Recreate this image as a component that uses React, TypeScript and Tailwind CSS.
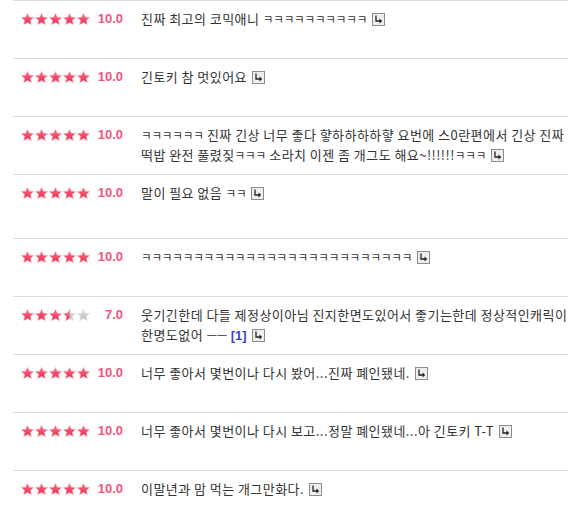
import React from "react";

type Review = { score: string; stars: number; text: React.ReactNode; h: string };

function Star({ fill }: { fill: "full" | "half" | "empty" }) {
  const d =
    "M6.5 0.4 L8.3 4.2 L12.6 4.6 L9.3 7.4 L10.3 11.6 L6.5 9.4 L2.7 11.6 L3.7 7.4 L0.4 4.6 L4.7 4.2 Z";
  const id = React.useId();
  return (
    <svg width="13" height="12" viewBox="0 0 13 12" className="shrink-0">
      <defs>
        <linearGradient id={id + "g"} x1="0" y1="0" x2="0" y2="1">
          <stop offset="0" stopColor="#ff6f8a" />
          <stop offset="1" stopColor="#ea2a4c" />
        </linearGradient>
        <linearGradient id={id + "e"} x1="0" y1="0" x2="0" y2="1">
          <stop offset="0" stopColor="#e0e0e0" />
          <stop offset="1" stopColor="#bdbdbd" />
        </linearGradient>
        <clipPath id={id + "c"}>
          <rect x="0" y="0" width="6.5" height="12" />
        </clipPath>
      </defs>
      <path
        d={d}
        fill={fill === "full" ? `url(#${id}g)` : `url(#${id}e)`}
        stroke={fill === "full" ? "#f8a8b6" : "#e2e2e2"}
        strokeWidth="0.6"
      />
      {fill === "half" && (
        <path d={d} fill={`url(#${id}g)`} stroke="#f8a8b6" strokeWidth="0.6" clipPath={`url(#${id}c)`} />
      )}
    </svg>
  );
}

function Stars({ n }: { n: number }) {
  const arr: ("full" | "half" | "empty")[] = [];
  for (let i = 0; i < 5; i++) {
    if (n >= i + 1) arr.push("full");
    else if (n >= i + 0.5) arr.push("half");
    else arr.push("empty");
  }
  return (
    <div className="flex gap-[1px]">
      {arr.map((f, i) => (
        <Star key={i} fill={f} />
      ))}
    </div>
  );
}

function ReplyIcon() {
  return (
    <svg width="13" height="13" viewBox="0 0 13 13" className="inline-block align-[-2px] ml-[5px]">
      <rect x="0.5" y="0.5" width="12" height="12" fill="#eeeeee" stroke="#8c8c8c" />
      <path d="M4 2.5 V8 H8" fill="none" stroke="#222" strokeWidth="1.3" />
      <path d="M7.5 5.6 L10.2 8 L7.5 10.4 Z" fill="#222" />
    </svg>
  );
}

function T({ s }: { s: string }) {
  const parts = s.split(/(ㅋ+|ㅡ+)/);
  return (
    <>
      {parts.map((p, i) =>
        /^(ㅋ+|ㅡ+)$/.test(p) ? (
          <span key={i} className="text-[11.5px] tracking-[-0.15px]">
            {p}
          </span>
        ) : (
          <React.Fragment key={i}>{p}</React.Fragment>
        )
      )}
    </>
  );
}

const reviews: Review[] = [
  { score: "10.0", stars: 5, h: "h-[58px]", text: <T s="진짜 최고의 코믹애니 ㅋㅋㅋㅋㅋㅋㅋㅋㅋㅋ" /> },
  { score: "10.0", stars: 5, h: "h-[58px]", text: <T s="긴토키 참 멋있어요" /> },
  {
    score: "10.0",
    stars: 5,
    h: "h-[58px]",
    text: (
      <>
        <T s="ㅋㅋㅋㅋㅋㅋ 진짜 긴상 너무 좋다 햫하하하하햫 요번에 스0란편에서 긴상 진짜" />
        <br />
        <T s="떡밥 완전 풀렸짖ㅋㅋㅋ 소라치 이젠 좀 개그도 해요~!!!!!!ㅋㅋㅋ" />
      </>
    ),
  },
  { score: "10.0", stars: 5, h: "h-[64px]", text: <T s="말이 필요 없음 ㅋㅋ" /> },
  { score: "10.0", stars: 5, h: "h-[58px]", text: <T s="ㅋㅋㅋㅋㅋㅋㅋㅋㅋㅋㅋㅋㅋㅋㅋㅋㅋㅋㅋㅋㅋㅋㅋㅋㅋㅋ" /> },
  {
    score: "7.0",
    stars: 3.5,
    h: "h-[58px]",
    text: (
      <>
        <T s="웃기긴한데 다들 제정상이아님 진지한면도있어서 좋기는한데 정상적인캐릭이" />
        <br />
        <T s="한명도없어 ㅡㅡ " />
        <span className="font-bold text-[#3346d3] font-['Liberation_Sans',sans-serif] tracking-normal">[1]</span>
      </>
    ),
  },
  { score: "10.0", stars: 5, h: "h-[58px]", text: <T s="너무 좋아서 몇번이나 다시 봤어...진짜 폐인됐네." /> },
  { score: "10.0", stars: 5, h: "h-[58px]", text: <T s="너무 좋아서 몇번이나 다시 보고...정말 폐인됐네...아 긴토키 T-T" /> },
  { score: "10.0", stars: 5, h: "h-[58px]", text: <T s="이말년과 맘 먹는 개그만화다." /> },
];

export default function App() {
  return (
    <div className="w-[568px] h-[508px] overflow-hidden bg-white">
      <div className="ml-[13px]">
        {reviews.map((r, i) => (
          <div key={i} className={`${r.h} border-t border-[#dcdcdc] flex items-start pt-[8px]`}>
            <div className="w-[128px] shrink-0 flex items-center h-[20px] pl-[8px]">
              <Stars n={r.stars} />
              <span className="ml-auto mr-[18px] text-[13px] leading-[20px] font-bold text-[#f2557a] font-['Liberation_Sans',sans-serif]">
                {r.score}
              </span>
            </div>
            <div className="flex-1 min-w-0 whitespace-nowrap text-[13px] tracking-[0.45px] leading-[20px] text-[#333333] font-['Noto_Sans_CJK_KR',sans-serif]">
              {r.text}
              <ReplyIcon />
            </div>
          </div>
        ))}
      </div>
    </div>
  );
}
